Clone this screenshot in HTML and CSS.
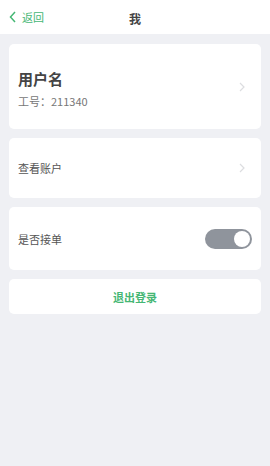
FILE: index.html
```html
<!DOCTYPE html>
<html>
<head>
    <meta charset="utf-8">
    <title>我</title>
    <link rel="stylesheet" href="styles.css">
</head>
<body>
    <div class="navbar">
        <a class="back">
            <svg width="7" height="12" viewBox="0 0 7 12"><path d="M6 1 L1.5 6 L6 11" fill="none" stroke="#45b774" stroke-width="1.5"/></svg>
            <span>返回</span>
        </a>
        <div class="title">我</div>
    </div>
    <div class="content">
        <div class="card user">
            <div class="info">
                <div class="name">用户名</div>
                <div class="job">工号：211340</div>
            </div>
            <svg class="arrow" width="6" height="10" viewBox="0 0 6 10"><path d="M1 1 L5 5 L1 9" fill="none" stroke="#dcdde0" stroke-width="1.2"/></svg>
        </div>
        <div class="card row">
            <span class="label">查看账户</span>
            <svg class="arrow" width="6" height="10" viewBox="0 0 6 10"><path d="M1 1 L5 5 L1 9" fill="none" stroke="#dcdde0" stroke-width="1.2"/></svg>
        </div>
        <div class="card row switch-row">
            <span class="label">是否接单</span>
            <div class="switch"><div class="knob"></div></div>
        </div>
        <div class="card logout">退出登录</div>
    </div>
</body>
</html>
```
FILE: styles.css
```css
body {
    margin: 0;
    background-color: #eff0f4;
    font-family: "Noto Sans CJK SC", "Noto Sans", sans-serif;
    color: #333;
}

.navbar {
    height: 34px;
    background-color: #fff;
    display: flex;
    align-items: center;
    justify-content: center;
    position: relative;
}

.back {
    position: absolute;
    left: 9px;
    top: 0;
    height: 34px;
    display: flex;
    align-items: center;
    gap: 6px;
    color: #45b774;
    font-size: 11px;
}

.title {
    font-size: 12px;
    font-weight: bold;
    color: #444;
    margin-top: 3px;
}

.content {
    padding: 10px 9px;
    display: flex;
    flex-direction: column;
    gap: 9px;
}

.card {
    background-color: #fff;
    border-radius: 5px;
    display: flex;
    align-items: center;
    box-sizing: border-box;
}

.user {
    height: 85px;
    padding: 0 16px 0 9px;
    justify-content: space-between;
}

.name {
    font-size: 15px;
    font-weight: bold;
    color: #444;
    line-height: 18px;
    margin-top: 6px;
}

.job {
    font-size: 11px;
    color: #777;
    margin-top: 5px;
}

.row {
    height: 60px;
    padding: 0 16px 0 9px;
    justify-content: space-between;
}

.switch-row {
    height: 63px;
    padding-right: 9px;
}

.label {
    font-size: 11px;
    color: #555;
}

.switch {
    width: 47px;
    height: 20px;
    border-radius: 10px;
    background-color: #8f949c;
    display: flex;
    align-items: center;
    justify-content: flex-end;
    padding: 0 2px;
    box-sizing: border-box;
}

.knob {
    width: 16px;
    height: 16px;
    border-radius: 50%;
    background-color: #fff;
}

.logout {
    height: 35px;
    justify-content: center;
    color: #45b774;
    font-size: 11px;
    font-weight: bold;
}
```
